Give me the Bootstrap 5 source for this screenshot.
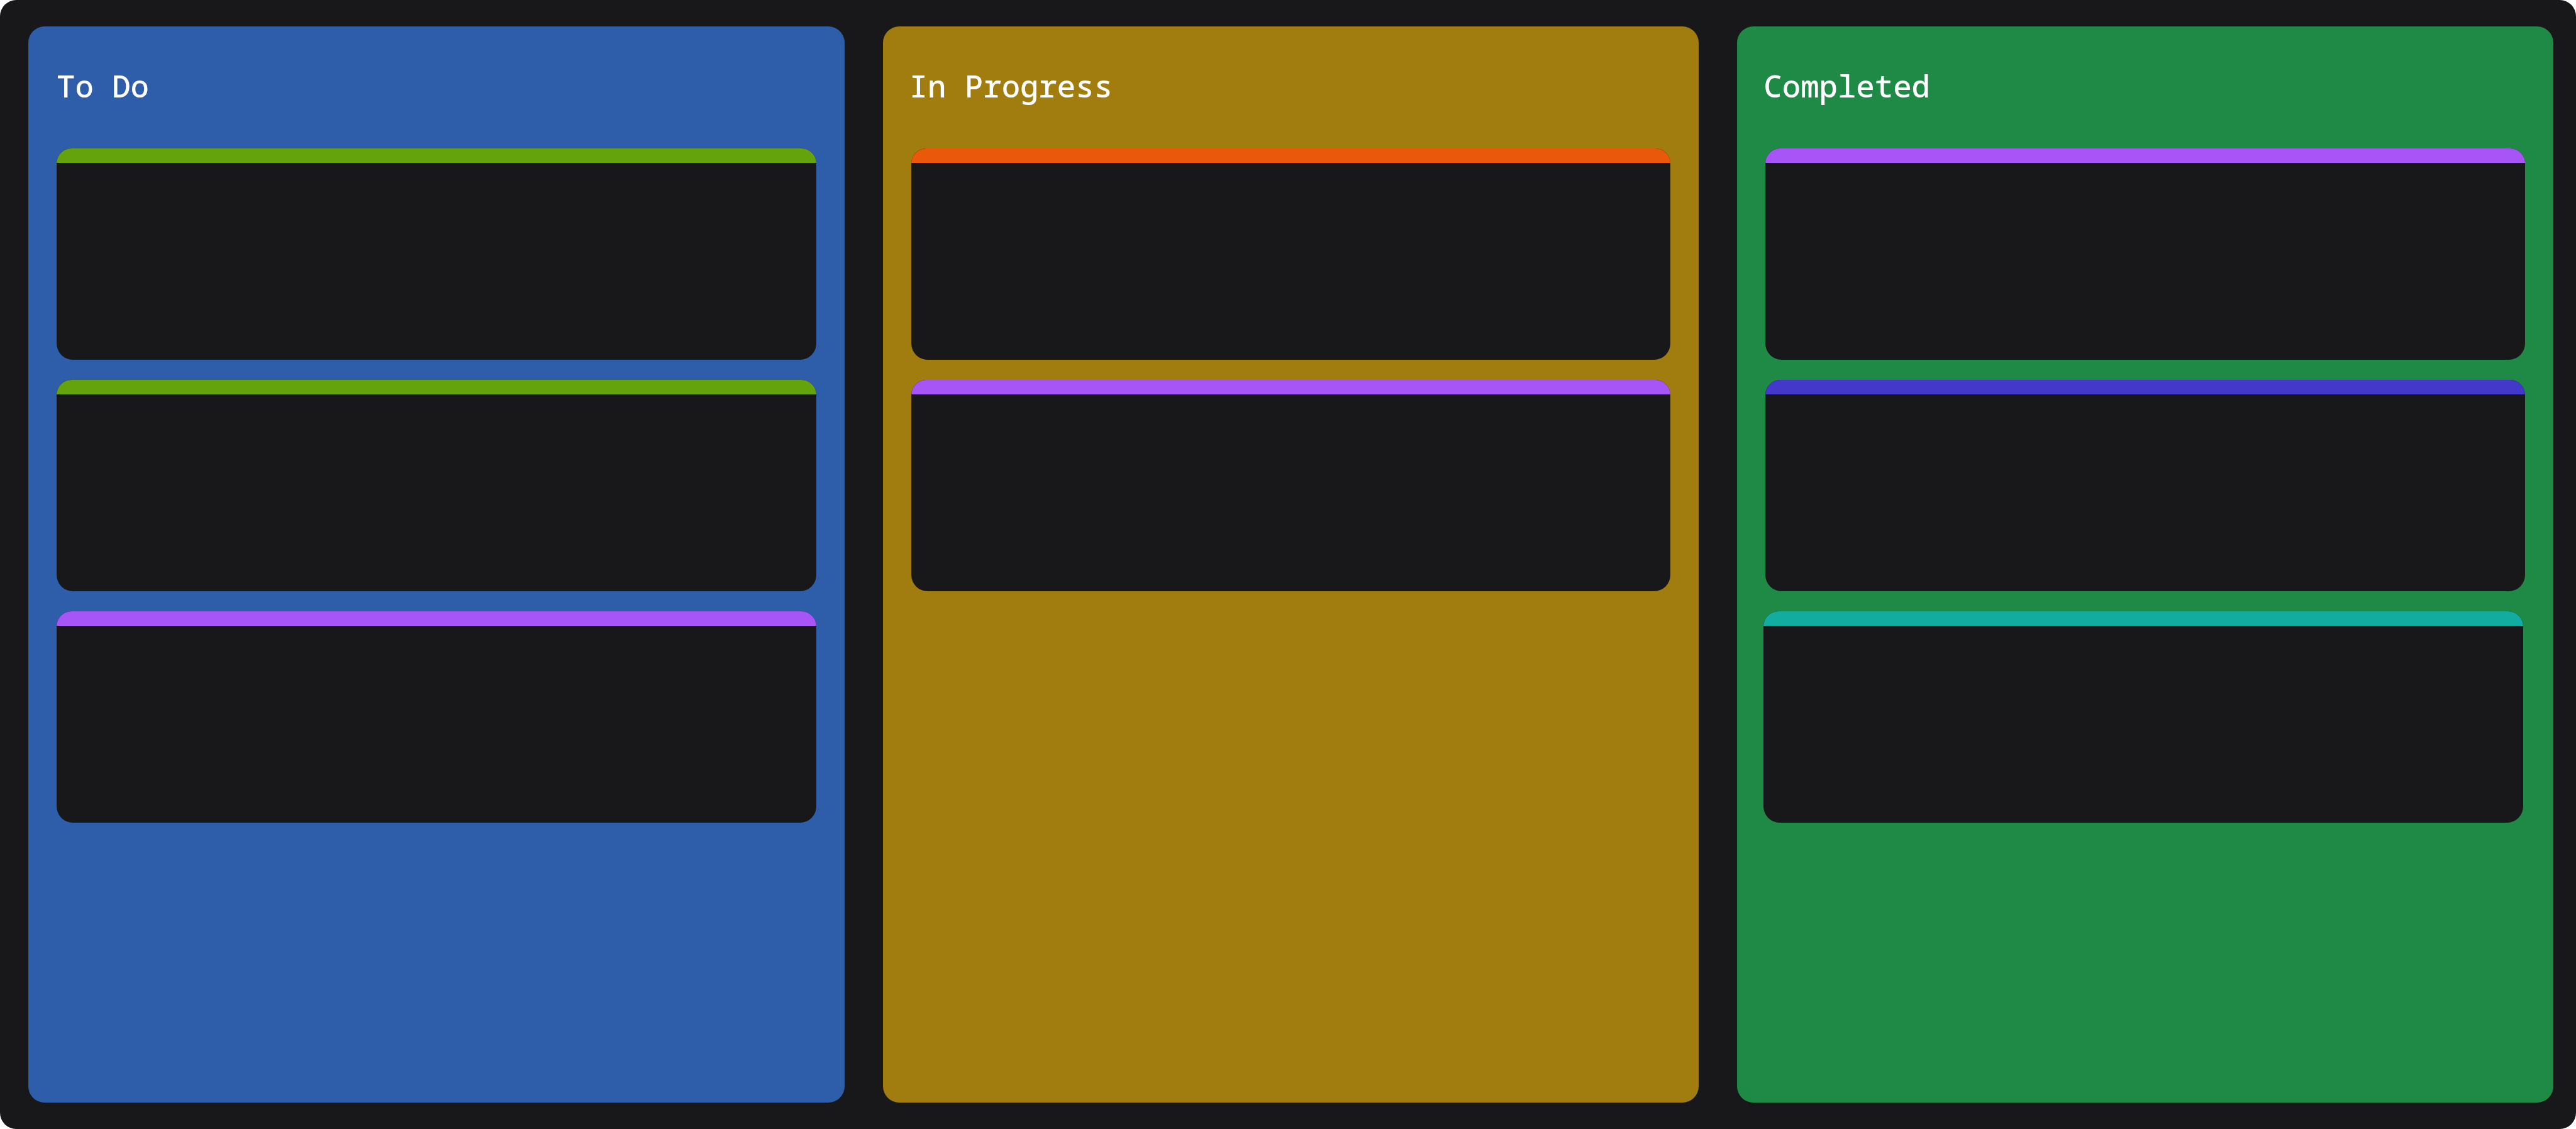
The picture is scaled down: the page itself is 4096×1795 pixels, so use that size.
<!DOCTYPE html>
<html lang="en" data-bs-theme="dark">
<head>
<meta charset="utf-8">
<meta name="viewport" content="width=device-width, initial-scale=1">
<title>Task board</title>
<link href="https://cdn.jsdelivr.net/npm/bootstrap@5.3.0/dist/css/bootstrap.min.css" rel="stylesheet">
<style>
  :root { --ink: #18181a; }
  body { background: #fff; font-family: "Noto Sans Mono", "DejaVu Sans Mono", "Liberation Mono", monospace; }
  .board { background: var(--ink); border-radius: 26px; padding: 42px 36px 42px 45px; gap: 61px; }
  .lane { flex: 1 1 0; min-width: 0; border-radius: 26px; padding: 0 45px 45px; }
  .lane-todo { background: #2e5eaa; }
  .lane-progress { background: #a17c0f; }
  .lane-done { background: #1f8946; }
  .lane-title { height: 194px; font-size: 49px; line-height: 84px; font-weight: 500; padding-top: 52px; color: #fff; }
  .task-list { gap: 32px; }
  .task { height: 336px; background: var(--ink); border-radius: 24px 24px 26px 26px; overflow: hidden; }
  .task-tag { height: 23px; }
  .flush { margin-left: -3px; margin-right: 3px; }
  .tag-lime { background: #65a30d; }
  .tag-purple { background: #a855f7; }
  .tag-orange { background: #ea580c; }
  .tag-indigo { background: #4338ca; }
  .tag-teal { background: #13aca0; }
</style>
</head>
<body>
<main class="board d-flex align-items-stretch min-vh-100">
  <section class="lane lane-todo" aria-labelledby="todo">
    <h2 id="todo" class="lane-title mb-0">To Do</h2>
    <div class="task-list d-flex flex-column">
      <article class="task"><div class="task-tag tag-lime"></div></article>
      <article class="task"><div class="task-tag tag-lime"></div></article>
      <article class="task"><div class="task-tag tag-purple"></div></article>
    </div>
  </section>
  <section class="lane lane-progress" aria-labelledby="progress">
    <h2 id="progress" class="lane-title flush mb-0">In Progress</h2>
    <div class="task-list d-flex flex-column">
      <article class="task"><div class="task-tag tag-orange"></div></article>
      <article class="task"><div class="task-tag tag-purple"></div></article>
    </div>
  </section>
  <section class="lane lane-done" aria-labelledby="done">
    <h2 id="done" class="lane-title flush mb-0">Completed</h2>
    <div class="task-list d-flex flex-column">
      <article class="task"><div class="task-tag tag-purple"></div></article>
      <article class="task"><div class="task-tag tag-indigo"></div></article>
      <article class="task flush"><div class="task-tag tag-teal"></div></article>
    </div>
  </section>
</main>
<script src="https://cdn.jsdelivr.net/npm/bootstrap@5.3.0/dist/js/bootstrap.bundle.min.js"></script>
</body>
</html>
